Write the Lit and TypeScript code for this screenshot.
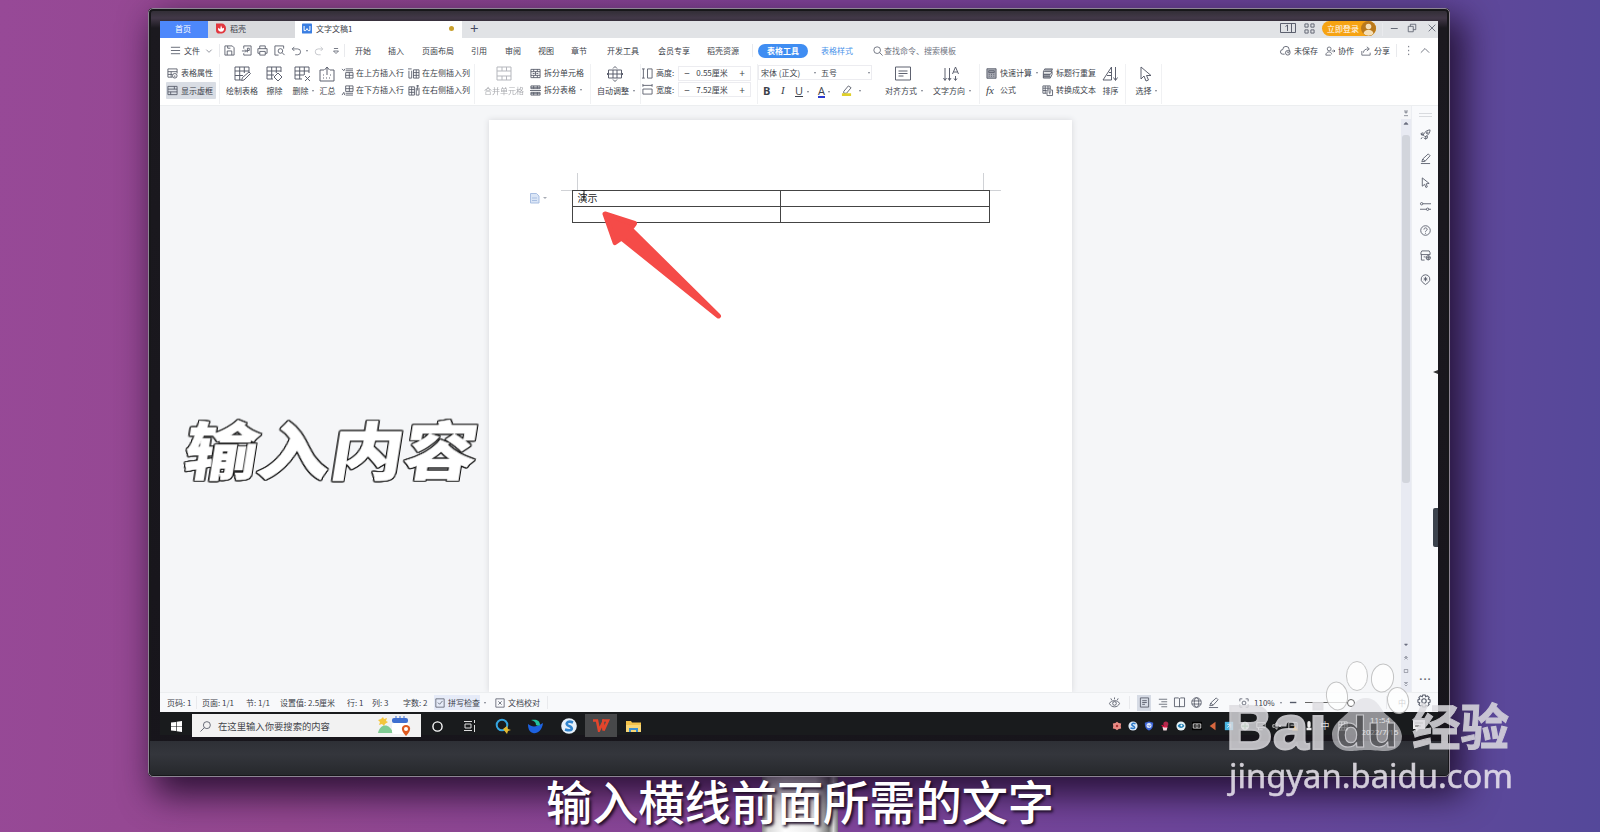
import { LitElement, html, svg, css, unsafeCSS } from "lit";
import { customElement } from "lit/decorators.js";

const ORIGIN = 160;
/* Turns a list of column starts on the screen into a padded grid track. */
const track = (xs: number[]) =>
  unsafeCSS(
    `padding-left:${xs[0] - ORIGIN}px;grid-template-columns:${xs
      .slice(1)
      .map((x, i) => `${x - xs[i]}px`)
      .join(" ")} auto;`
  );

const ic = (body: unknown, w = 11, h = w, box = "0 0 12 12") =>
  html`<svg class="ic" width=${w} height=${h} viewBox=${box}>${body}</svg>`;

const caret = html`<i class="caret"></i>`;
const sep = html`<i class="sep"></i>`;

const I = {
  burger: svg`<path d="M1 2.500h10M1 6h10M1 9.500h10"/>`,
  chev: svg`<path d="M2 4l4 4 4-4"/>`,
  save: svg`<path d="M1 1h8l2 2v8H1zM3.500 11V6.500h5V11M4 1v2.500h3"/>`,
  pdf: svg`<path d="M3 4V1h8v10H3V9M1 6.500h5M4.500 5l1.500 1.500L4.500 8M7 8V3.500h2v2.500H7"/>`,
  print: svg`<path d="M3 4V1h6v3M3 9H1V4h10v5H9M3 7h6v4H3z"/>`,
  preview: svg`<path d="M10.500 4V1H1v10h4"/><circle cx="7" cy="6.500" r="2.500"/><path d="M9 8.500l2.500 2.500"/>`,
  undo: svg`<path d="M4 1L1.500 3.500 4 6M1.500 3.500H8a3.500 3.500 0 0 1 0 7H5"/>`,
  redo: svg`<path d="M8 1l2.500 2.500L8 6M10.500 3.500H5a3.500 3.500 0 0 0 0 7H8"/>`,
  drop: svg`<path d="M3.500 3h5M3 6h6L6 9z"/>`,
  search: svg`<circle cx="5" cy="5" r="4"/><path d="M8 8l3.500 3.500"/>`,
  cloud: svg`<path d="M5 10H3a2.500 2.500 0 0 1 0-5 3.500 3.500 0 0 1 7 0l1 2"/><circle cx="8.500" cy="8.500" r="2.500"/><path d="M8.500 7v1.500h1.500"/>`,
  person: svg`<circle cx="5" cy="3.500" r="2.300"/><path d="M1 11c0-5 7-5 7-1M1 11h6M8 6h4M10.500 4.500L12 6l-1.500 1.500"/>`,
  share: svg`<path d="M1 6v5h10V8M3 8c0-3 2-4.500 6-4.500M7 1l3 2.500L7 6"/>`,
  up: svg`<path d="M1 8l5-5 5 5"/>`,
  props: svg`<path d="M6 10H1V1h10v5M1 4h10M1 7h5M4.500 4v6"/><circle cx="8.500" cy="8.500" r="2.500"/><path d="M8.500 8v2"/>`,
  dash: svg`<path d="M1 1.500h10v9H1zM1 4.500h10M1 7.500h10M4 7.500v3M8 1.500v3"/>`,
  draw: svg`<path d="M15 6V1H1v13h6M1 5h14M1 9.500h8M5.700 1v13M10.300 1v6M7.500 14.500l1-3L15 6l1.500 1.500L10 14z"/>`,
  erase: svg`<path d="M15 6V1H1v12h6M1 5h14M1 9h7M5.700 1v12M10.300 1v6M8 11l4-4 4 4-4 4z"/>`,
  del: svg`<path d="M15 7V1H1v12h7M1 5h14M1 9h9M5.700 1v12M10.300 1v8M11 10l5 5M16 10l-5 5"/>`,
  sum: svg`<path d="M5 4H1v11h14V4h-4M4 12h1M7 12h1M10 12h1M4 9h1M11 9h1M8 9V1.500M5.500 4L8 1l2.500 3"/>`,
  rowUp: svg`<path d="M4 1h8M4 3h8M4 5h8v6H4zM4 8h8M8 5v6M0 1l2 2 1-2"/>`,
  rowDn: svg`<path d="M4 1h8v6H4zM4 4h8M8 1v6M4 9h8M4 11h8M0 11l2-3 1 3"/>`,
  colL: svg`<path d="M1 3v8h3V3M6 2v9h6V2zM6 5h6M6 8h6M9 2v9M0 1h4"/>`,
  colR: svg`<path d="M1 2v9h6V2zM1 5h6M1 8h6M4 2v9M9 3v8h3V3M9 1h3M10.500 0v6"/>`,
  merge: svg`<path d="M1 1h14v13H1zM1 5h14M1 10h14M6 1v4M10.500 1v4M6 10v4M10.500 10v4"/>`,
  split: svg`<path d="M1 1.500h10v9H1zM1 4h10M1 8h10M4 1.500V4M8 1.500V4M4 8v2.500M8 8v2.500M6 4v4M3 6h2M7 6h2"/>`,
  splitT: svg`<path d="M1 1h10v3H1zM0 6h12M1 8h10v3H1zM4 1v3M8 1v3M4 8v3M8 8v3M1 2.500h10M1 9.500h10"/>`,
  auto: svg`<path d="M1.500 4h13v8h-13zM1.500 8h13M6 4v8M10 4v8M6 2.500L8 .5l2 2M6 13.500l2 2 2-2M1.500 6.500L0 8l1.500 1.500M14.500 6.500L16 8l-1.500 1.500"/>`,
  height: svg`<path d="M0 1h3M0 11h3M1.500 1v10M6 1h5v10H6z"/>`,
  width: svg`<path d="M1 0v3M11 0v3M1 1.500h10M1 5.500h10V11H1z"/>`,
  align: svg`<path d="M.5 1h15v13H.5zM3.500 5h9M3.500 7.500h9M3.500 10h5"/>`,
  dir: svg`<path d="M2 2v12M.5 12L2 14.500 3.500 12M6.500 2v12M5 12l1.500 2.500L8 12M12.500 10v4M11 12.500l1.500 2 1.500-2M9.500 8l3-7 3 7M10.500 6h4"/>`,
  calc: svg`<path class="g" d="M1 1h10v10H1z"/><path d="M1 .8h10v10.400H1zM3 3h6v2H3zM3 7h1M5.500 7h1M8 7h1M3 9h1M5.500 9h1M8 9h1"/>`,
  repeat: svg`<path class="g" d="M3 1h8v3H3zM1 6h8v5H1z"/><path d="M3 1h8.500L10 4H1.500zM1.500 4v3H9l2-3M1.500 7v4H9l2-4v-3M1.500 9H9"/>`,
  convert: svg`<path d="M5 9H1V1h8v4M1 3.500h8M1 6h4M3.500 1v8M6.500 1v4M5.500 5.500h6v6h-6zM7 7.500h3M8.500 7.500V10"/>`,
  sort: svg`<path d="M9.500 1v13M9.500 1L1 14h8.500M7 6.500h2M5 9.500h4M13.500 1v13M11.500 11.500l2 3 2-3"/>`,
  cursor: svg`<path d="M4 1v12l3-3 2 5 2.500-1-2-4.500H14z"/>`,
  rocket: svg`<path d="M5 8L3.500 6.500C5 3 8 1 11 1c0 3-2 6-5.500 7.500zM4 5.500L1.500 6l2 1M6.500 8l-.5 3-2-1.500M2.500 9L1 11M3.500 4L1 5l1 2M8 7.500v2.500L6 11"/><circle cx="7.800" cy="4.200" r="1"/>`,
  pen: svg`<path d="M2 9.500l1-3L9 1l2 2-5.500 6zM3 6.500L5.500 9M1 11.500h10"/>`,
  pointer: svg`<path d="M2.500 1v9l2.500-2 1.500 3.500 1.500-.8-1.400-3.200 3.400-.5z"/>`,
  sliders: svg`<path d="M3 3h9M0 9h7M9.500 9H12"/><circle cx="1.800" cy="3" r="1.300"/><circle cx="8.300" cy="9" r="1.300"/>`,
  help: svg`<circle cx="6" cy="6" r="5.200"/><path d="M4.300 5c0-2.500 3.500-2.500 3.500 0 0 1-1.800 1-1.800 2.300M6 8.500v1"/>`,
  tools: svg`<path d="M1 5V3l1-2h8l1 2v2zM1.500 5v6H5M4 7.500h2"/><circle cx="9" cy="8.500" r="2.300"/><path d="M6.500 8.500h5M9 6v5"/>`,
  badge: svg`<path d="M6 .8a4.800 4.800 0 0 1 3 8.500L6 11.500 3 9.300A4.800 4.800 0 0 1 6 .8z"/><path d="M6 3v5M4 5.500h4M4.500 4l3 3M7.500 4l-3 3"/>`,
  gear: svg`<circle cx="6" cy="6" r="1.900"/><path d="M5 .8h2l.4 1.500 1.500-.7L10.400 3l-.7 1.500 1.500.5v2l-1.500.5.7 1.500L9 10.400l-1.500-.7L7 11.200H5l-.5-1.500-1.500.7L1.600 9l.7-1.500L.8 7V5l1.500-.5L1.600 3 3 1.600l1.500.7z"/>`,
  check: svg`<path d="M1 1h10v10H1zM3.500 5.500l2 2 3.500-4"/>`,
  xbox: svg`<path d="M1 1h10v10H1zM4 4l4 4M8 4L4 8"/>`,
  eye: svg`<path d="M.5 7c2-4 9-4 11 0-2 5-9 5-11 0zM6 .5v2M2 1.500l1 2M10 1.500l-1 2"/><circle cx="6" cy="7" r="2"/>`,
  page: svg`<path d="M1.500 1h9v10h-9zM3.500 4h5M3.500 6h5M3.500 8h3"/>`,
  outline: svg`<path d="M1 1.500h10M4 4.500h7M1 7.500h10M4 10.500h7"/>`,
  book: svg`<path d="M6 2v9M6 2L5 1H.5v9.500H6L6 11l.5-.5h5V1H7z"/>`,
  globe: svg`<circle cx="6" cy="6" r="5.200"/><ellipse cx="6" cy="6" rx="2.400" ry="5.200"/><path d="M1 4.300h10M1 7.700h10"/>`,
  fit: svg`<path d="M1 4V1h3M8 1h3v3M11 8v3H8M4 11H1V8"/><circle cx="6" cy="6" r="2.300"/>`,
};

const tall = (icon: unknown, label: string, drop = false, dim = false) => html`
  <div class="tall ${dim ? "dim" : ""} ${drop ? "drop" : ""}">
    ${ic(icon, 17, 17, "0 0 17 17")}
    <span class="label">${label}${drop ? caret : ""}</span>
  </div>`;

const pair = (a: unknown[], b: unknown[]) => html`
  <div class="pair">
    ${[a, b].map(
      ([icon, label, drop, on]) => html`<div class="line ${on ? "on" : ""}">
        ${icon === "fx" ? html`<em class="fx">fx</em>` : ic(icon)}<span>${label}${drop ? caret : ""}</span>
      </div>`
    )}
  </div>`;

const spin = (icon: unknown, label: string, value: string) => html`
  <div class="spin">${ic(icon)}<span>${label}</span>
    <div class="box"><b>−</b><span>${value}</span><b>+</b></div>
  </div>`;

@customElement("app-root")
export class AppRoot extends LitElement {
  static styles = css`
    :host {
      display: block; position: relative; width: 1600px; height: 832px; overflow: hidden;
      box-sizing: border-box; padding: 8px 0 0 148px;
      background: linear-gradient(93deg, #974997 0, #93478f 20%, #82449a 50%, #6c459a 75%, #5f489a 90%, #54489a 100%);
      font: 8px/10px "Noto Sans CJK SC", "Noto Sans", sans-serif; color: #3c3f4a;
    }
    * { box-sizing: border-box; }
    .ic { display: block; flex: none; fill: none; stroke: #555a68; stroke-width: 0.95; overflow: visible; }
    .ic .g { fill: #a8abb3; stroke: none; }
    .caret { display: inline-block; vertical-align: 2px; margin: 0 -7px 0 3.500px; border: 1.500px solid transparent; border-top: 2px solid #777c88; border-bottom: 0; }
    .sep { width: 1px; height: 13px; background: #e9eaed; }
    .monitor {
      width: 1302px; height: 769px; padding: 13px 12px 0;
      background: linear-gradient(#2c2b30 0, #423848 10px, #1b191f 20px, #17151b 100%);
      border-radius: 5px; outline: 1px solid #8d8593; outline-offset: -1px;
      box-shadow: inset 0 0 0 3px #17171a, 10px 14px 34px 4px rgba(22, 6, 34, 0.8);
      display: flex; flex-direction: column; position: relative;
    }
    .chin { height: 34px; margin: 6px -10px 0; background: linear-gradient(#2e3036, #34363c 40%, #26282c); }
    .screen { width: 1278px; height: 714px; display: flex; flex-direction: column; background: #fff; white-space: nowrap; position: relative; flex: none; }
    .stand { position: absolute; left: 762px; top: 776px; width: 76px; height: 56px; background: linear-gradient(90deg, #888 0, #ddd 8%, #fff 30%, #eee 70%, #777 88%, #ddd 94%, #777 100%); }

    .tabs { height: 17px; display: grid; align-items: center; background: #e1e3e6; ${track([160, 208, 295, 462, 1280, 1304, 1322, 1382, 1389, 1407, 1427])} }
    .tabs > .ic { margin-bottom: 3px; }
    .tab { height: 17px; width: 100%; display: flex; align-items: center; gap: 4px; padding: 0 0 2px 8px; }
    .tab.home { background: #4d88fb; color: #fff; justify-content: center; padding: 0 2px 2px 0; }
    .tab.shell { background: #d9dadd; }
    .tab.doc { background: #fff; padding: 0 8px 2px 7px; }
    .tab.doc .name { flex: 1; }
    .tab.plus { font: 15px/15px "Open Sans", sans-serif; color: #464b62; }
    .dot { width: 5px; height: 5px; border-radius: 50%; background: #c9a02c; }
    .login { width: 54px; height: 15px; margin-bottom: 2px; border-radius: 8px; background: #f6a313; color: #fff; display: flex; align-items: center; justify-content: space-between; padding-left: 5px; }
    .avatar { width: 15px; height: 15px; border-radius: 50%; background: #b9791c; }

    .menu { height: 26px; padding-bottom: 1px; display: grid; align-items: center;
      ${track([170, 184, 205, 219, 224, 241, 257, 274, 291, 302, 314, 331, 344, 355, 388, 422, 471, 505, 538, 571, 607, 658, 707, 752, 758, 821, 873, 884, 1280, 1294, 1325, 1338, 1361, 1374, 1396, 1405, 1420])} }
    .pill { width: 50px; height: 14px; border-radius: 7px; background: #3f8df2; color: #fff; font-weight: 700; display: grid; place-items: center; }
    .blue { color: #4b93ea; }
    .hint { color: #70747f; }
    .faint { opacity: 0.4; }

    .ribbon { height: 42px; display: grid; align-items: start; position: relative; border-bottom: 1px solid #eceef0;
      ${track([166, 219, 226, 266, 289, 319, 341, 407, 474, 484, 529, 590, 597, 640, 642, 757, 758, 885, 933, 979, 985, 1041, 1102, 1125, 1132, 1161])} }
    .ribbon > .sep { height: 40px; background: #f0f1f3; }
    .tall { width: max-content; display: flex; flex-direction: column; align-items: center; gap: 3px; padding-top: 2px; }
    .tall.drop .ic { margin-left: 5px; }
    .dim { opacity: 0.45; }
    .label .caret { margin-right: -6.500px; }
    .pair, .spins, .fonts { display: grid; grid-template-rows: 17px 17px; padding-top: 1px; }
    .line { display: flex; align-items: center; gap: 3px; height: 16px; padding-left: 1px; }
    .line.on { background: #d9dde4; width: 50px; height: 17px; border-radius: 1px; }
    .fx { width: 11px; font: italic 11px/11px "Liberation Serif", serif; }
    .spins { grid-template-rows: 16.500px 16.500px; }
    .spin { display: grid; grid-template-columns: 14px 22px 73px; align-items: center; }
    .box { height: 15px; border: 1px solid #ececf0; display: grid; grid-template-columns: 16px 1fr 16px; align-items: center; text-align: center; }
    .box span { margin-left: -5px; }
    .box b { font: 10px/12px "Open Sans", sans-serif; }
    .selects { display: grid; grid-template-columns: 60px 54px; height: 15px; align-items: center; border: 1px solid #ececf0; width: 114px; }
    .selects span { display: flex; justify-content: space-between; align-items: center; padding: 0 3px 0 2px; }
    .selects .caret { margin: 0; }
    .formats { display: grid; grid-template-columns: 18px 14px 23px 22px 20px; padding-left: 5px; align-items: center; font: 11px/13px "Open Sans", sans-serif; }
    .u { text-decoration: underline; }
    .ital { font-family: "Liberation Serif", serif; font-style: italic; }
    .fa { border-bottom: 2px solid #2c3bd0; line-height: 10px; display: inline-block; }

    .work { flex: 1; min-height: 0; display: grid; grid-template-columns: 329px 583px 329px 10px 27px; background: #f5f6f8; }
    .paper { margin-top: 14px; background: #fff; box-shadow: 0 0 6px #d5d6da; clip-path: inset(-6px -6px 0 -6px); padding: 70px 0 0 82.500px; position: relative; }
    .grid { width: 418px; border-collapse: collapse; table-layout: fixed; font-size: 10px; line-height: 12px; color: #222; }
    .grid td { border: 1px solid #444; height: 16px; padding: 0 0 2px 5px; }
    .marks { position: absolute; left: 0; top: 0; overflow: visible; fill: none; }
    .track { background: #e8eaf2; display: flex; flex-direction: column; align-items: center; font-size: 6px; line-height: 8px; color: #71758a; }
    .track .top { background: #f5f6f8; width: 100%; height: 13px; display: grid; place-items: center; }
    .thumb { width: 8px; height: 348px; background: #d2d5dc; border-radius: 3px; margin-top: 8px; }
    .ends { margin-top: auto; padding-bottom: 5px; display: grid; gap: 7px; }
    .side { background: #f9fafc; border-left: 1px solid #eceef2; display: flex; flex-direction: column; align-items: center; padding-top: 7px; gap: 13.100px; }
    .grip { width: 13px; height: 4px; border: solid #d9dbdf; border-width: 1px 0; margin-bottom: -1px; }
    .more { margin: auto -1px 9px 0; font: 700 11px/8px "Open Sans", sans-serif; letter-spacing: 1px; color: #666a74; }

    .status { height: 20px; display: grid; align-items: center; background: #f8f9fb; border-top: 1px solid #eceef0;
      ${track([167, 196, 202, 246, 280, 347, 372, 403, 434, 495, 508, 547, 1109, 1129, 1137, 1158, 1174, 1191, 1208, 1239, 1254, 1289, 1305, 1386, 1398, 1417])} }
    .spell { background: #e6ebf8; display: flex; gap: 3px; align-items: center; height: 15px; width: 46px; padding-left: 1px; }
    .view { background: #d6dbe5; width: 14px; height: 16px; display: grid; place-items: center; }
    .slider { width: 46px; height: 1px; background: #666; display: flex; align-items: center; justify-content: flex-end; }
    .knob { flex: none; width: 8px; height: 8px; border: 1px solid #666; border-radius: 50%; background: #fff; margin-right: -4px; }
    .status .gear { margin-top: -3px; }

    .task { height: 23px; display: grid; align-items: center; background: #191b1d; color: #eee;
      ${track([160, 192, 421, 453, 487, 519, 552, 585, 617, 1109, 1357, 1410])} }
    .task > svg { justify-self: center; display: block; margin-top: 2px; }
    .task > .folder { justify-self: start; margin-left: 9px; }
    .task > .note { justify-self: start; margin-left: 3px; }
    .find { width: 229px; height: 23px; background: #f2f2f2; color: #44464c; display: flex; align-items: center; gap: 7px; padding: 2px 8px 0; font-size: 9.330px; }
    .find .weather { margin-left: auto; display: block; }
    .wps { width: 32px; height: 23px; background: #47484a; display: grid; place-items: center; }
    .tray { display: grid; grid-template-columns: repeat(14, 16px) 20px; justify-items: center; align-items: center; color: #ddd; font-size: 9px; padding-top: 2px; }
    .tray svg { display: block; }
    .clock { width: 46px; text-align: center; font: 7.800px/12px "Noto Sans", sans-serif; padding-top: 2px; }

    .sideTab { position: absolute; right: 0; top: 487px; width: 5px; height: 39px; border-radius: 2px 0 0 2px; background: #3b424c; }
    .nick { position: absolute; right: 0; top: 349px; border: 2px solid transparent; border-right: 5px solid #333; }
    .arrow { position: absolute; left: 0; top: 0; }
    .headline { position: absolute; left: 186px; top: 402px; font-size: 73px; line-height: 90px; font-weight: 900; color: #fff; white-space: nowrap;
      -webkit-text-stroke: 0.600px #fff; transform: skewX(-9deg) scaleY(0.85);
      filter: drop-shadow(1px 0 0 #111) drop-shadow(-1px 0 0 #111) drop-shadow(0 1px 0 #111) drop-shadow(0 -1px 0 #111); }
    .subtitle { position: absolute; left: 546px; top: 772px; font-size: 46.200px; line-height: 56px; font-weight: 500; color: #fff; white-space: nowrap; text-shadow: 2px 2px 3px #1c0c24; }
    .mark { position: absolute; left: 1220px; top: 655px; opacity: 0.85; }
  `;

  render() {
    const tray = [
      svg`<path fill="#e88b84" d="M6 1l2 1.500 3 .5-.5 3 .5 3-3 .5L6 11 4 9.500 1 9l.5-3L1 3l3-.5z"/><circle cx="6" cy="6" r="1.500" fill="#a33"/>`,
      svg`<circle cx="6" cy="6" r="5.500" fill="#dceaf8"/><path d="M9 3.500C5 1.500 3 5 6 6s3 4-3 2.500" stroke="#2b79c9" stroke-width="1.800" fill="none"/>`,
      svg`<path fill="#3d66d8" d="M6 .5l5 1.500c0 5-1 7.500-5 9.500C2 9.500 1 7 1 2z"/><circle cx="6" cy="5.500" r="3" fill="#dfe8fa"/><path d="M4.500 5l1.500 1.500L8 5" stroke="#3d66d8" fill="none"/>`,
      svg`<circle cx="7" cy="3.500" r="3" fill="#b3294c"/><path fill="#f3d9df" d="M3 7h6l-1 4.500H4z"/><path d="M2 5l3 2h4" stroke="#e14" stroke-width="1.500" fill="none"/>`,
      svg`<circle cx="6" cy="6" r="5.500" fill="#e7f3f7"/><path fill="#1f7fb5" d="M2 6c2-4 7-3 8 0-2 3-6 3-8 0z"/><circle cx="6.500" cy="5.500" r="1.200" fill="#fff"/>`,
      svg`<path fill="#000" d="M0 1h12v10H0z"/><path d="M1.500 3.500h9v5h-9zM6 3.500v5M3 6h1.500M7.500 6H9" stroke="#eee" fill="none"/>`,
      svg`<path fill="#d9683f" d="M9 1v10L2 6z"/>`,
      svg`<path fill="#49b6e2" d="M1 1h10v10H1z"/><path d="M4 8l4-4M4 4h4v4" stroke="#e8f7ff" fill="none"/>`,
      svg`<circle cx="6" cy="6" r="5" fill="#e5f3e5"/><path d="M6 2v8M2 6h8" stroke="#4a9a50" stroke-width="1.500"/>`,
      svg`<path d="M1 2h10v6H1zM4 10.500h4M3 8v3" stroke="#ddd" fill="none"/>`,
      svg`<path d="M1 4.500h2L6 2v8L3 7.500H1zM8 4.500l3 3M11 4.500l-3 3" stroke="#ddd" fill="none"/>`,
      svg`<path d="M1 2h10v8H1zM3 5h6" stroke="#ddd" fill="none"/><path fill="#f0a020" d="M8.500 5.500L12 11.500H5z"/>`,
      svg`<path fill="#eee" d="M4 2a2 2 0 0 1 4 0v4a2 2 0 0 1-4 0zM3 8h6v3H3z"/>`,
    ];
    return html`
      <div class="stand"></div>
      <div class="monitor">
        <div class="screen">
          <div class="tabs">
            <div class="tab home">首页</div>
            <div class="tab shell">
              <svg width="10" height="11" viewBox="0 0 12 12"><path d="M0 0h7a5 6 0 0 1 0 12H4a4 4 0 0 1-4-4z" fill="#e2373f"/><path d="M6 10C2 9 2 6 3 5l2 2 1-5 1.500 4L9.500 5C10 8 9 9.500 6 10z" fill="#fff"/></svg>
              稻壳</div>
            <div class="tab doc">
              <svg width="10" height="11" viewBox="0 0 12 12"><rect width="12" height="12" rx="1" fill="#3a7ee2"/><path d="M2.500 3v5.500h2L6 6l1.500 2.500h2V3" stroke="#fff" fill="none" stroke-width="1.200"/></svg>
              <span class="name">文字文稿1</span><i class="dot"></i></div>
            <div class="tab plus">+</div>
            <svg class="ic" width="16" height="10" viewBox="0 0 16 10"><path d="M.5.500h15v9H.5zM11.500.500v9M5.500 3.500L7.500 2v6"/></svg>
            ${ic(svg`<path d="M1 1h3.500v3.500H1zM7.500 1H11v3.500H7.500zM1 7.500h3.500V11H1zM7.500 7.500H11V11H7.500z"/>`)}
            <div class="login">立即登录<svg class="avatar" viewBox="0 0 15 15"><circle cx="7.500" cy="5.500" r="2.800" fill="#f4dfb8"/><path d="M2.500 12.500c1-5 9-5 10 0-2.500 3-7.500 3-10 0z" fill="#f4dfb8"/></svg></div>
            ${sep}
            ${ic(svg`<path d="M2 6h7.500"/>`)}
            ${ic(svg`<path d="M1.500 4h6v6.500h-6zM4 4V1.500h6.500V8h-3"/>`, 10)}
            ${ic(svg`<path d="M2 2l8 8M10 2l-8 8"/>`, 10)}
          </div>

          <div class="menu">
            ${ic(I.burger)}<span>文件</span>${ic(I.chev, 8)}${sep}
            ${ic(I.save)}${ic(I.pdf)}${ic(I.print)}${ic(I.preview)}${ic(I.undo, 10)}<span>${caret}</span>
            <span class="faint">${ic(I.redo, 10)}</span>${ic(I.drop, 10)}${sep}
            ${["开始", "插入", "页面布局", "引用", "审阅", "视图", "章节", "开发工具", "会员专享", "稻壳资源"].map((t) => html`<span>${t}</span>`)}
            ${sep}<span class="pill">表格工具</span><span class="blue">表格样式</span>
            ${ic(I.search, 10)}<span class="hint">查找命令、搜索模板</span>
            ${ic(I.cloud)}<span>未保存</span>${ic(I.person, 10)}<span>协作</span>${ic(I.share, 10)}<span>分享</span>${sep}
            ${ic(svg`<path d="M4 1v1.500M4 5.300v1.500M4 9.500V11"/>`)}${ic(I.up, 10)}
          </div>

          <div class="ribbon">
            ${pair([I.props, "表格属性"], [I.dash, "显示虚框", false, true])}${sep}
            ${tall(I.draw, "绘制表格")}${tall(I.erase, "擦除")}${tall(I.del, "删除", true)}${tall(I.sum, "汇总")}
            ${pair([I.rowUp, "在上方插入行"], [I.rowDn, "在下方插入行"])}
            ${pair([I.colL, "在左侧插入列"], [I.colR, "在右侧插入列"])}${sep}
            ${tall(I.merge, "合并单元格", false, true)}
            ${pair([I.split, "拆分单元格"], [I.splitT, "拆分表格", true])}${sep}
            ${tall(I.auto, "自动调整", true)}${sep}
            <div class="spins">${spin(I.height, "高度:", "0.55厘米")}${spin(I.width, "宽度:", "7.52厘米")}</div>${sep}
            <div class="fonts">
              <div class="selects"><span>宋体 (正文)${caret}</span><span>五号${caret}</span></div>
              <div class="formats">
                <b>B</b><span class="ital">I</span><span><span class="u">U</span>${caret}</span>
                <span><span class="fa">A</span>${caret}</span>
                <span class="line"><svg class="ic" width="11" height="11" viewBox="0 0 12 12"><path d="M3 7l5-6 3 2-5 6H3z"/><rect x="1" y="9" width="10" height="3" fill="#e0d02a" stroke="none"/></svg>${caret}</span>
              </div>
            </div>
            ${tall(I.align, "对齐方式", true)}${tall(I.dir, "文字方向", true)}${sep}
            ${pair([I.calc, "快速计算", true], ["fx", "公式"])}
            ${pair([I.repeat, "标题行重复"], [I.convert, "转换成文本"])}
            ${tall(I.sort, "排序")}${sep}${tall(I.cursor, "选择", true)}${sep}
          </div>

          <div class="work">
            <div></div>
            <div class="paper">
              <svg class="marks" width="583" height="120">
                <path d="M72 70.500h11M88.500 53v17M494.500 53v17M501 70.500h11" stroke="#d0d2d6"/>
                <path d="M41.500 73.500h6l2.500 2.500v7h-8.500z" fill="#dbe6f6" stroke="#a9bfe2"/><path d="M43 78h5M43 80.500h5" stroke="#a9bfe2"/>
                <path d="M54 77h4l-2 2z" fill="#a7abb4"/><path d="M92.500 70.500h5M95 70.500v9" stroke="#222"/>
              </svg>
              <table class="grid"><tr><td>演示</td><td></td></tr><tr><td></td><td></td></tr></table>
            </div>
            <div></div>
            <div class="track"><span class="top">${ic(svg`<path d="M3 3h6M6 4v3M3 10h6M4 6l2-2 2 2"/>`, 8)}</span>
              ${ic(svg`<path d="M3 8l3-3 3 3z" fill="#71758a"/>`, 8)}<div class="thumb"></div>
              <div class="ends">${[
                svg`<path d="M3 4h6L6 7.500z" fill="#71758a"/>`,
                svg`<path d="M3 5l3-3 3 3zM3 9l3-3 3 3"/>`,
                svg`<path d="M2.500 3h7v6h-7z"/>`,
                svg`<path d="M3 3l3 3 3-3zM3 7l3 3 3-3"/>`,
              ].map((p) => ic(p, 6))}</div></div>
            <div class="side"><i class="grip"></i>
              ${[I.rocket, I.pen, I.pointer, I.sliders, I.help, I.tools, I.badge].map((i) => ic(i))}
              <span class="more">···</span></div>
          </div>

          <div class="status">
            <span>页码: 1</span>${sep}<span>页面: 1/1</span><span>节: 1/1</span><span>设置值: 2.5厘米</span><span>行: 1</span><span>列: 3</span><span>字数: 2</span>
            <span class="spell">${ic(I.check, 10)}<span>拼写检查${caret}</span></span>
            ${ic(I.xbox, 10)}<span>文档校对</span>${sep}
            ${ic(I.eye)}${sep}<span class="view">${ic(I.page)}</span>${ic(I.outline, 10)}${ic(I.book)}${ic(I.globe)}${ic(I.pen)}
            ${ic(I.fit, 10)}<span>110% ${caret}</span>
            ${ic(svg`<path d="M1 6h7" stroke-width="1.500"/>`)}<div class="slider"><i class="knob"></i></div>
            ${sep}<span>中</span><span class="gear">${ic(I.gear, 14)}</span>
          </div>

          <div class="task">
            <svg width="11" height="11" viewBox="0 0 12 12"><path fill="#fff" d="M0 1.700L5.500 1v4.700H0zM6.200.9L12 0v5.700H6.200zM0 6.400h5.500V11L0 10.300zM6.200 6.400H12V12l-5.800-.9z"/></svg>
            <div class="find">
              <svg class="ic" width="11" height="11" viewBox="0 0 12 12"><circle cx="7.500" cy="4.500" r="3.800"/><path d="M4.700 7.300L.5 11.500"/></svg>
              在这里输入你要搜索的内容
              <svg class="weather" width="36" height="20" viewBox="0 0 36 20"><path d="M6 1l1 2 3-1-1 3 2 1-3 2-1 2-2-2-3 1 1-3-2-2 3-1z" fill="#f4c63c"/><path d="M1 17C3 7 13 7 16 17z" fill="#7fcb93"/><rect x="15" y="7" width="17" height="11" rx="2" fill="#fff"/><rect x="15" y="2" width="16" height="5" rx="2" fill="#3f6fd0"/><path d="M19 0v3M23 0v3M27 0v3" stroke="#3f6fd0"/><path d="M29 20c-6-6-5-11 0-11s6 5 0 11z" fill="#dd5a20"/><circle cx="29" cy="13" r="2" fill="#fff"/></svg>
            </div>
            <svg width="11" height="11" viewBox="0 0 12 12"><circle cx="6" cy="6" r="5" stroke="#fff" stroke-width="1.500" fill="none"/></svg>
            <svg width="12" height="12" viewBox="0 0 12 12"><path d="M0 1.500h8M0 10.500h8M1 4h6v4H1zM10.500 0v3M10.500 5v7" stroke="#ddd" fill="none"/></svg>
            <svg width="16" height="16" viewBox="0 0 16 16"><circle cx="7" cy="7" r="5.300" stroke="#35a5e0" stroke-width="2" fill="none"/><path d="M8 11l4-3 1 3 3 1-3 1-1 3z" fill="#e4b92e"/></svg>
            <svg width="17" height="15" viewBox="0 0 17 15"><path d="M1 5c4 3 7 4 15-1-1 8-6 11-10 10S1 9 1 5z" fill="#1d62e0"/><path d="M4 1c5-1 9 0 9 5-1 1-3 1-4 0C9 3 7 2 4 1z" fill="#21c1a0"/></svg>
            <svg width="16" height="16" viewBox="0 0 16 16"><circle cx="8" cy="8" r="7.800" fill="#e6f0fa"/><path d="M12 4.500C6 2 3.500 6.500 8 8s4 6-4 3.500" stroke="#3184ce" stroke-width="2.600" fill="none"/></svg>
            <div class="wps"><svg width="17" height="13" viewBox="0 0 17 13"><path d="M0 1.500h4l2 10 4-8 .5 8L15 1.500H9" stroke="#e2452c" stroke-width="2.600" fill="none"/></svg></div>
            <svg class="folder" width="15" height="13" viewBox="0 0 15 13"><path d="M0 1h5l1 1.500h9V12H0z" fill="#f2c14a"/><path d="M0 5h15v7H0z" fill="#f8d674"/><path d="M3 12V8h9v4h-2v-2H5v2z" fill="#3c8fd0"/></svg>
            <div class="tray">
              ${tray.map((t) => html`<svg width="10" height="10" viewBox="0 0 12 12">${t}</svg>`)}
              <span>中</span>
              <svg width="10" height="10" viewBox="0 0 12 12"><path d="M1 1h10v10H1zM1 4.500h10M1 8h10M4.500 1v10M8 1v10" stroke="#ddd" fill="none"/></svg>
            </div>
            <div class="clock">11:54<br />2022/7/15</div>
            <svg class="note" width="12" height="12" viewBox="0 0 12 12"><path d="M0 0h12v9H6l-3 3V9H0z" fill="#eee"/><path d="M2 3h8M2 6h6" stroke="#444"/></svg>
          </div>
          <i class="sideTab"></i><i class="nick"></i>
        </div>
        <div class="chin"></div>
      </div>

      <svg class="arrow" width="800" height="400"><path d="M605 214L634.500 223.500 630.500 229 718.500 316 621.500 238 615 242.500z" fill="#f54b48" stroke="#f54b48" stroke-width="5" stroke-linejoin="round"/></svg>
      <div class="headline">输入内容</div>
      <div class="subtitle">输入横线前面所需的文字</div>
      <svg class="mark" width="310" height="150" viewBox="1220 655 310 150">
        <g fill="#fff" fill-opacity="0.9" stroke="#bbb" stroke-width="1">
          <ellipse cx="1337" cy="696" rx="10.500" ry="14" transform="rotate(-8 1337 696)"/>
          <ellipse cx="1357" cy="676" rx="10.500" ry="14.500"/>
          <ellipse cx="1382.500" cy="678" rx="11" ry="14" transform="rotate(8 1382 678)"/>
          <ellipse cx="1398" cy="700.500" rx="10.500" ry="13" transform="rotate(-12 1398 700)"/>
        </g>
        <path d="M1366 698c9 0 13 7 17 13s18 12 19 25c0 10-7 15-17 15-8 0-12-1-19-1s-9 1-16 1c-11 0-18-6-18-16 0-12 12-17 18-25 4-6 7-12 16-12z" fill="#dddce0" fill-opacity="0.72"/>
        <g fill="#dddce0" font-family="Liberation Sans, sans-serif" font-weight="700">
          <text x="1226" y="749" font-size="63" stroke="#dddce0" stroke-width="2" fill-opacity="0.95" textLength="101" lengthAdjust="spacingAndGlyphs">Bai</text>
          <text x="1336" y="747" font-size="45" textLength="62" lengthAdjust="spacingAndGlyphs" fill="#2b2b30" fill-opacity="0.55" stroke="#e4e3e8" stroke-width="1">du</text>
          <text x="1412" y="745" font-size="48.500" stroke="#dddce0" stroke-width="1" font-family="Noto Sans CJK SC, sans-serif">经验</text>
        </g>
        <text x="1229" y="788" font-size="33.500" fill="#eeeaf2" stroke="#eeeaf2" stroke-width="0.500" font-family="Noto Sans, sans-serif" textLength="284" lengthAdjust="spacingAndGlyphs">jingyan.baidu.com</text>
      </svg>
    `;
  }
}
